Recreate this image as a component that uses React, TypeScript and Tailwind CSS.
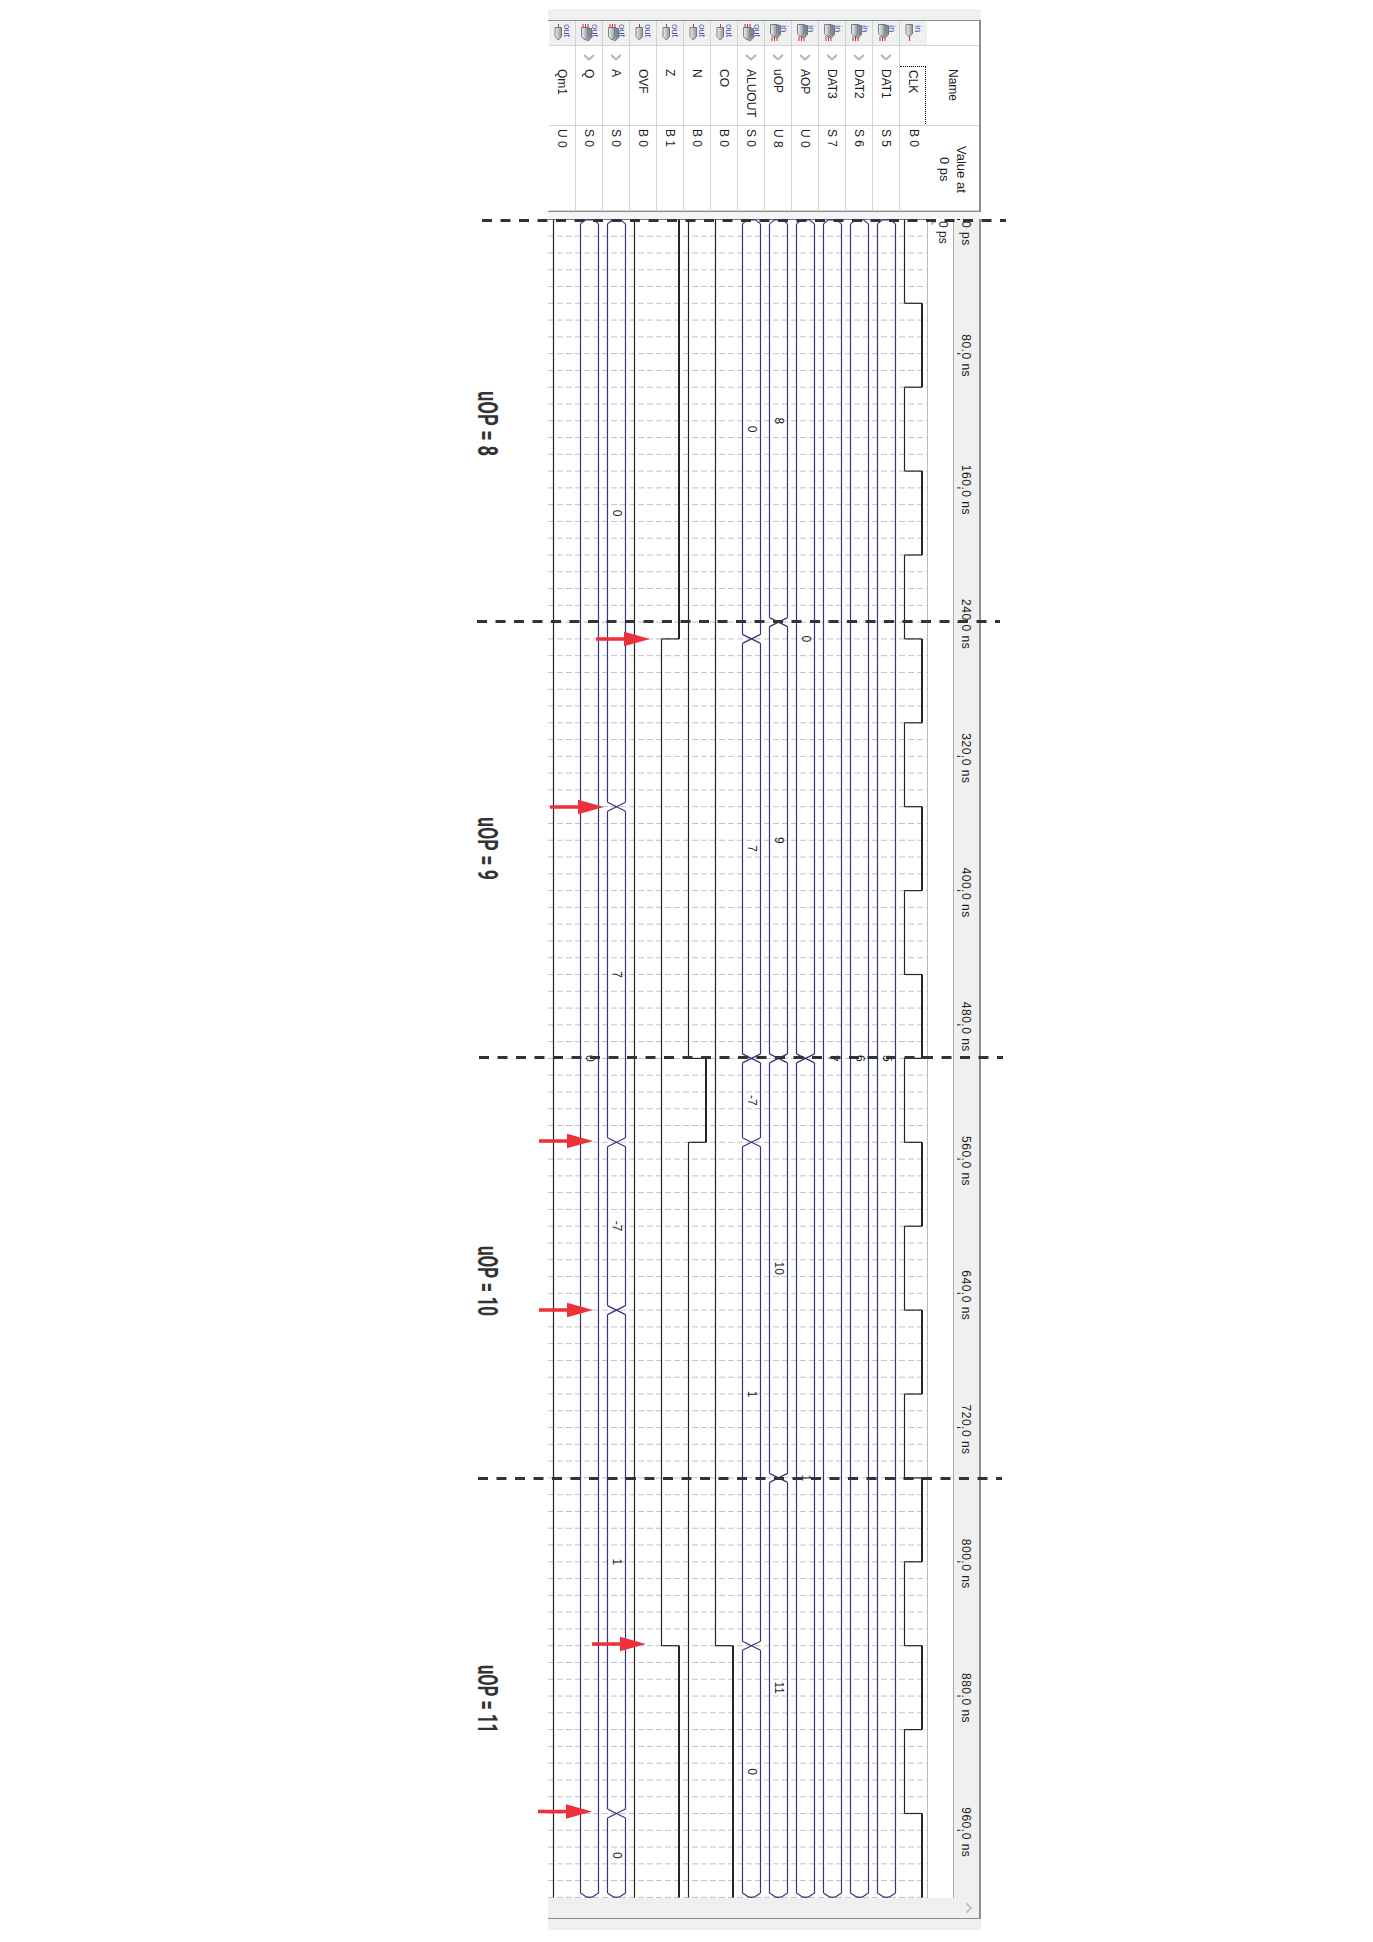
import { useId } from "react";

// time scale of the waveform: px per ns, measured from the ruler ticks
const NS = 1.678;
const TOP = 0.4;
const END_NS = 1000;
const ty = (t: number) => TOP + t * NS;

interface Signal {
  name: string;
  value: string;
  dir: "in" | "out";
  bus?: boolean;
  changes?: number[];
  labels?: [number, string][];
  edges?: [number, number][];
}

const clockEdges: [number, number][] = [...Array(20)].map((_, k) => [k * 50, k % 2]);

const signals: Signal[] = [
  { name: "Qm1", value: "U 0", dir: "out", edges: [[0, 0]] },
  { name: "Q", value: "S 0", dir: "out", bus: true, labels: [[500, "0"]] },
  {
    name: "A",
    value: "S 0",
    dir: "out",
    bus: true,
    changes: [350, 550, 650, 950],
    labels: [[175, "0"], [450, "7"], [600, "-7"], [800, "1"], [975, "0"]],
  },
  { name: "OVF", value: "B 0", dir: "out", edges: [[0, 0]] },
  { name: "Z", value: "B 1", dir: "out", edges: [[0, 1], [250, 0], [850, 1]] },
  { name: "N", value: "B 0", dir: "out", edges: [[0, 0], [500, 1], [550, 0]] },
  { name: "CO", value: "B 0", dir: "out", edges: [[0, 0], [850, 1]] },
  {
    name: "ALUOUT",
    value: "S 0",
    dir: "out",
    bus: true,
    changes: [250, 500, 550, 850],
    labels: [[125, "0"], [375, "7"], [525, "-7"], [700, "1"], [925, "0"]],
  },
  {
    name: "uOP",
    value: "U 8",
    dir: "in",
    bus: true,
    changes: [240, 500, 750],
    labels: [[120, "8"], [370, "9"], [625, "10"], [875, "11"]],
  },
  { name: "AOP", value: "U 0", dir: "in", bus: true, changes: [500], labels: [[250, "0"], [750, "1"]] },
  { name: "DAT3", value: "S 7", dir: "in", bus: true, labels: [[500, "7"]] },
  { name: "DAT2", value: "S 6", dir: "in", bus: true, labels: [[500, "6"]] },
  { name: "DAT1", value: "S 5", dir: "in", bus: true, labels: [[500, "5"]] },
  { name: "CLK", value: "B 0", dir: "in", edges: clockEdges },
];

const ticks = [80, 160, 240, 320, 400, 480, 560, 640, 720, 800, 880, 960];
const gridLines = [...Array(100)].map((_, i) => (i + 1) * 10);

function PinBody({ x, top, fill }: { x: number; top: number; fill: string }) {
  return (
    <path
      d={`M${x} ${top}h6.5v9l-3.2 3.6l-3.3 -3.6z`}
      fill={fill}
      stroke="#5b6470"
      strokeWidth="0.8"
    />
  );
}

function PinIcon({ dir, bus }: { dir: "in" | "out"; bus?: boolean }) {
  const id = useId();
  const fill = `url(#${id})`;
  const top = dir === "out" ? 6.5 : 3.5;
  const redTop = dir === "out" ? 3 : 15.5;
  const redBottom = dir === "out" ? 6.5 : 20;
  return (
    <svg width="26" height="24" className="block">
      <defs>
        <linearGradient id={id} x1="0" x2="1" y1="0" y2="0">
          <stop offset="0" stopColor="#f2f2f4" />
          <stop offset="1" stopColor="#8d929a" />
        </linearGradient>
      </defs>
      {bus ? (
        <>
          <path d={`M7 ${redTop}V${redBottom}M9.5 ${redTop}V${redBottom}M12 ${redTop}V${redBottom}`} stroke="#e0202c" strokeWidth="1" />
          <PinBody x={9} top={top + 1} fill={fill} />
          <PinBody x={7.5} top={top + 0.5} fill={fill} />
          <PinBody x={5.5} top={top} fill={fill} />
        </>
      ) : (
        <>
          <path d={`M9.5 ${redTop}V${redBottom}`} stroke="#e0202c" strokeWidth="1" />
          <PinBody x={6} top={top} fill={fill} />
        </>
      )}
      <text
        transform={`translate(${bus ? 16 : 15} ${dir === "out" ? 3 : 4}) rotate(90)`}
        fontSize="9.5"
        fill="#3d55ad"
      >
        {dir}
      </text>
    </svg>
  );
}

function SignalColumn({ signal }: { signal: Signal }) {
  const isClock = signal.name === "CLK";
  return (
    <div className={isClock ? "w-[27px]" : "w-[27px] border-r border-[#d3d3d3]"}>
      <div className="h-[25px] border-b border-[#d3d3d3] bg-[#f0f0f0]">
        <PinIcon dir={signal.dir} bus={signal.bus} />
      </div>
      <div className={isClock ? "h-[80px] pt-[20px] border-b border-[#d3d3d3]" : "h-[80px] border-b border-[#d3d3d3]"}>
        {isClock ? (
          <div className="mr-px h-[58px] border-t border-r border-dotted border-black pt-[3px] flex justify-center">
            <span className="[writing-mode:vertical-rl]">{signal.name}</span>
          </div>
        ) : (
          <div className="flex flex-col items-center">
            <div className="h-[23px] flex items-center justify-center">
              {signal.bus && (
                <svg width="12" height="7">
                  <path d="M1 1l5 4.5l5 -4.5" fill="none" stroke="#b4b4b4" strokeWidth="2" />
                </svg>
              )}
            </div>
            <span className="[writing-mode:vertical-rl]">{signal.name}</span>
          </div>
        )}
      </div>
      <div className="h-[85px] border-b border-[#d3d3d3] pt-[3px] flex justify-center">
        <span className="[writing-mode:vertical-rl]">{signal.value}</span>
      </div>
    </div>
  );
}

function BusWave({ left, changes = [] }: { left: number; changes?: number[] }) {
  const right = left + 18;
  const endY = ty(END_NS);
  const stops = [0, ...changes, END_NS];
  let d = "";
  stops.slice(0, -1).forEach((start, i) => {
    const a = ty(start);
    const b = ty(stops[i + 1]);
    d += `M${left} ${a + 4.5}V${b - 4.5}M${right} ${a + 4.5}V${b - 4.5}`;
  });
  changes.forEach((t) => {
    const y = ty(t);
    d += `M${left} ${y - 4.5}L${right} ${y + 4.5}M${right} ${y - 4.5}L${left} ${y + 4.5}`;
  });
  // closed ends at both sides of the time range
  d += `M${left} ${ty(0) + 4.5}L${left + 5} ${ty(0) + 0.5}H${right - 5}L${right} ${ty(0) + 4.5}`;
  d += `M${left} ${endY - 4.5}L${left + 6} ${endY - 0.5}L${left + 9} ${endY}L${right - 6} ${endY - 0.5}L${right} ${endY - 4.5}`;
  return <path d={d} fill="none" stroke="#35357f" strokeWidth="1.2" />;
}

function BitWave({ left, edges }: { left: number; edges: [number, number][] }) {
  const high = left + 17.5;
  return (
    <>
      {edges.map(([t, level], i) => {
        const a = ty(t);
        const b = ty(i + 1 < edges.length ? edges[i + 1][0] : END_NS);
        return (
          <g key={t} stroke="#252525" fill="none">
            <path d={`M${level ? high : left} ${a}V${b}`} strokeWidth={level ? 2 : 1.2} />
            {i > 0 && <path d={`M${left} ${a}H${high}`} strokeWidth="1.2" />}
          </g>
        );
      })}
    </>
  );
}

function WaveView() {
  return (
    <svg width="433" height="1679" className="block">
      <rect x="405" y="0" width="27" height="1679" fill="#f0f0f0" />
      {gridLines.map((t) => (
        <path key={t} d={`M0 ${ty(t)}H379`} stroke="#c2c2c2" strokeWidth="1" strokeDasharray="6 3" />
      ))}
      <path d="M0 0.5H379" stroke="#6f7399" strokeWidth="1" />
      <path d="M379.5 0V1679" stroke="#bcbcbc" strokeWidth="1" />
      <path d="M405.5 0V1679" stroke="#a9a9a9" strokeWidth="1" />
      <path d="M432 0V1679" stroke="#8a8f96" strokeWidth="2" />

      {signals.map((s, i) => {
        const left = 27 * i + 5.5;
        return (
          <g key={s.name}>
            {s.bus ? <BusWave left={left} changes={s.changes} /> : <BitWave left={left} edges={s.edges ?? []} />}
            {s.labels?.map(([t, text]) => (
              <text
                key={t}
                transform={`translate(${left + 5} ${ty(t)}) rotate(90)`}
                fontSize="12"
                textAnchor="middle"
                fill="#1c1c24"
              >
                {text}
              </text>
            ))}
          </g>
        );
      })}

      <path d="M383 3.5h4.5M384 3v3" stroke="#b5b5b5" strokeWidth="1.5" fill="none" />
      <text transform="translate(391 2) rotate(90)" fontSize="12" fill="#1c1c24">0 ps</text>
      <text transform="translate(414 2) rotate(90)" fontSize="12" letterSpacing="0.5" fill="#1c1c24">0 ps</text>
      <path d="M409 0.5h3" stroke="#222" strokeWidth="1" />
      {ticks.map((t) => (
        <g key={t}>
          <path d={`M409 ${ty(t)}h3.5`} stroke="#222" strokeWidth="1" />
          <text
            transform={`translate(414 ${ty(t) + 2}) rotate(90)`}
            fontSize="12"
            letterSpacing="0.5"
            textAnchor="middle"
            fill="#1c1c24"
          >
            {t}.0 ns
          </text>
        </g>
      ))}
    </svg>
  );
}

const dashLines = [
  { y: 220.5, from: 482, to: 1006 },
  { y: 621.5, from: 477, to: 1000 },
  { y: 1057.5, from: 479, to: 1003 },
  { y: 1478.5, from: 478, to: 1002 },
];

// x is the tail of the arrow, all of them are 54px long
const arrows = [
  { x: 596, y: 639 },
  { x: 550, y: 807 },
  { x: 539, y: 1141 },
  { x: 539, y: 1310 },
  { x: 592, y: 1644 },
  { x: 538, y: 1811.5 },
];

const stepLabels = [
  { text: "uOP = 8", y: 391, len: 65 },
  { text: "uOP = 9", y: 817, len: 63 },
  { text: "uOP = 10", y: 1246, len: 70 },
  { text: "uOP = 11", y: 1665, len: 68 },
];

function Annotations() {
  return (
    <svg width="1373" height="1942" className="absolute inset-0 pointer-events-none">
      {dashLines.map((l) => (
        <path
          key={l.y}
          d={`M${l.from} ${l.y}H${l.to}`}
          stroke="#333333"
          strokeWidth="3"
          strokeDasharray="10 8.5"
        />
      ))}
      {arrows.map((a) => (
        <path
          key={a.y}
          d={`M${a.x} ${a.y - 1.7}h28v-5.6l26 7.3l-26 7.3v-5.6h-28z`}
          fill="#ee3138"
        />
      ))}
      {stepLabels.map((l) => (
        <text
          key={l.text}
          transform={`translate(478 ${l.y}) rotate(90)`}
          fontSize="27"
          fontWeight="700"
          fill="#333333"
          textLength={l.len}
          lengthAdjust="spacingAndGlyphs"
          className="font-['Roboto']"
        >
          {l.text}
        </text>
      ))}
    </svg>
  );
}

export default function App() {
  return (
    <div className="relative w-[1373px] h-[1942px] bg-white overflow-hidden pl-[548px] pt-[9px] font-['Liberation_Sans',sans-serif] text-[12px] leading-none text-[#1c1c24]">
      <div className="w-[433px]">
        <div className="h-[11px] bg-[#f0f0f0]" />

        <div className="flex pl-px border-t border-b border-r-2 border-[#8a8f96]">
          {signals.map((s) => (
            <SignalColumn key={s.name} signal={s} />
          ))}
          <div className="flex-1">
            <div className="h-[25px] border-b border-[#d3d3d3]" />
            <div className="h-[80px] border-b border-[#d3d3d3] pt-[23px] flex justify-center">
              <span className="[writing-mode:vertical-rl]">Name</span>
            </div>
            <div className="h-[85px] border-b border-[#d3d3d3] flex justify-center items-center pt-[2px]">
              <span className="[writing-mode:vertical-rl] text-center text-[13px] leading-[17px]">
                Value at
                <br />0 ps
              </span>
            </div>
          </div>
        </div>

        <div className="h-[7px] bg-[#f5f5f5]" />

        <WaveView />

        <div className="h-[21px] bg-[#f0f0f0] border-b border-r-2 border-[#8a8f96] flex items-center justify-end pr-[6px]">
          <svg width="8" height="10">
            <path d="M1.5 0.5l4.5 4.5l-4.5 4.5" fill="none" stroke="#c2c2c2" strokeWidth="2" />
          </svg>
        </div>
        <div className="h-[11px] bg-[#f0f0f0]" />
      </div>

      <Annotations />
    </div>
  );
}
